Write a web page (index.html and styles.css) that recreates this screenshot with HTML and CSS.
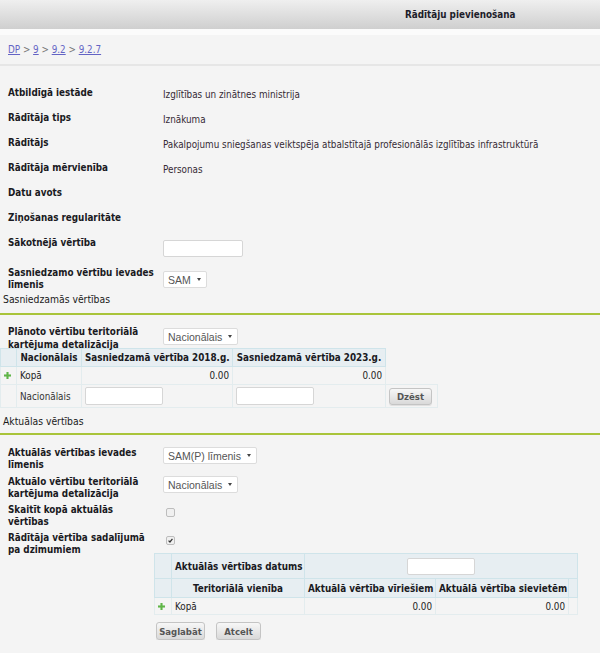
FILE: index.html
```html
<!DOCTYPE html>
<html lang="lv">
<head>
<meta charset="utf-8">
<title>Rādītāju pievienošana</title>
<link rel="stylesheet" href="styles.css">
</head>
<body>
<div class="topbar"><span class="title">Rādītāju pievienošana</span></div>
<div class="strip"></div>
<div class="crumbs"><a href="#">DP</a> &gt; <a href="#">9</a> &gt; <a href="#">9.2</a> &gt; <a href="#">9.2.7</a></div>

<div class="form main">
  <div class="row"><div class="lbl">Atbildīgā iestāde</div><div class="val">Izglītības un zinātnes ministrija</div></div>
  <div class="row"><div class="lbl">Rādītāja tips</div><div class="val">Iznākuma</div></div>
  <div class="row"><div class="lbl">Rādītājs</div><div class="val">Pakalpojumu sniegšanas veiktspēja atbalstītajā profesionālās izglītības infrastruktūrā</div></div>
  <div class="row"><div class="lbl">Rādītāja mērvienība</div><div class="val">Personas</div></div>
  <div class="row"><div class="lbl">Datu avots</div><div class="val"></div></div>
  <div class="row"><div class="lbl">Ziņošanas regularitāte</div><div class="val"></div></div>
  <div class="row r30"><div class="lbl">Sākotnējā vērtība</div><div class="ctl"><input class="txt w80" type="text"></div></div>
  <div class="row two"><div class="lbl">Sasniedzamo vērtību ievades<br>līmenis</div><div class="ctl"><span class="sel">SAM</span></div></div>
</div>

<div class="section">Sasniedzamās vērtības</div>

<div class="form sec1">
  <div class="row two"><div class="lbl">Plānoto vērtību teritoriālā<br>kartējuma detalizācija</div><div class="ctl"><span class="sel">Nacionālais</span></div></div>
</div>

<table class="grid g1">
  <colgroup><col class="c16"><col class="c65"><col class="c151"><col class="c153"><col class="c52"></colgroup>
  <tr class="head r19"><th></th><th>Nacionālais</th><th>Sasniedzamā vērtība 2018.g.</th><th>Sasniedzamā vērtība 2023.g.</th><td class="blank"></td></tr>
  <tr class="r19"><td class="ic"><svg class="plus" viewBox="0 0 8 8"><rect x="2.8" y="0" width="2.4" height="8" /><rect x="0" y="2.8" width="8" height="2.4" /></svg></td><td>Kopā</td><td class="num">0.00</td><td class="num">0.00</td><td class="blank"></td></tr>
  <tr class="r24"><td></td><td>Nacionālais</td><td><input class="txt w78" type="text"></td><td><input class="txt w78" type="text"></td><td class="bc"><button class="btn">Dzēst</button></td></tr>
</table>

<div class="section s2">Aktuālas vērtības</div>

<div class="form sec2">
  <div class="row h29"><div class="lbl">Aktuālās vērtības ievades<br>līmenis</div><div class="ctl"><span class="sel">SAM(P) līmenis</span></div></div>
  <div class="row h28"><div class="lbl">Aktuālo vērtību teritoriālā<br>kartējuma detalizācija</div><div class="ctl"><span class="sel">Nacionālais</span></div></div>
  <div class="row h28"><div class="lbl">Skaitīt kopā aktuālās<br>vērtības</div><div class="ctl"><span class="cb"></span></div></div>
  <div class="row h21"><div class="lbl">Rādītāja vērtība sadalījumā<br>pa dzimumiem</div><div class="ctl"><span class="cb"><svg viewBox="0 0 9 9"><path d="M2 4.6 L3.8 6.4 L7 2.4" /></svg></span></div></div>
</div>

<table class="grid g2">
  <colgroup><col class="c17"><col class="c133"><col class="c131"><col class="c133b"><col class="c9"></colgroup>
  <tr class="head r26"><th></th><th class="left">Aktuālās vērtības datums</th><th colspan="3"><input class="txt w68" type="text"></th></tr>
  <tr class="head r20"><th></th><th>Teritoriālā vienība</th><th>Aktuālā vērtība vīriešiem</th><th>Aktuālā vērtība sievietēm</th><th></th></tr>
  <tr class="r18"><td class="ic"><svg class="plus" viewBox="0 0 8 8"><rect x="2.8" y="0" width="2.4" height="8" /><rect x="0" y="2.8" width="8" height="2.4" /></svg></td><td>Kopā</td><td class="num">0.00</td><td class="num">0.00</td><td></td></tr>
</table>

<div class="actions"><button class="btn b1">Saglabāt</button><button class="btn b2">Atcelt</button></div>
</body>
</html>
```
FILE: styles.css
```css
html, body {
  margin: 0;
  padding: 0;
  background: #f4f4f4;
}
body {
  font-family: "DejaVu Sans Condensed", "DejaVu Sans", sans-serif;
  font-size: 9.8px;
  color: #222;
}
.topbar {
  height: 29px;
  background: linear-gradient(#efefef, #cfcfcf);
  line-height: 29px;
}
.title {
  padding-left: 405px;
  font-weight: bold;
  font-size: 9.8px;
  color: #1d1d2a;
}
.strip {
  height: 6px;
  background: #fbfbfb;
}
.crumbs {
  height: 29px;
  line-height: 29px;
  padding-left: 8px;
  border-bottom: 2px solid #e6e6e6;
  color: #777;
}
.crumbs a {
  color: #6464c4;
}
.form.main {
  padding-top: 21px;
}
.row {
  display: grid;
  grid-template-columns: 155px auto;
  padding-left: 8px;
  height: 25px;
  align-items: start;
}
.lbl {
  font-weight: bold;
  line-height: 12px;
  color: #1a1a22;
}
.val {
  line-height: 12px;
  padding-top: 2px;
  color: #352a35;
}
.ctl {
  display: flex;
  align-items: flex-start;
}
.r30 { height: 30px; }
.row.two {
  height: 25px;
}
.row.two .lbl {
  line-height: 11.5px;
}
.row.two .sel {
  margin-top: 4px;
}
.txt {
  box-sizing: border-box;
  height: 17px;
  border: 1px solid #d6d6d6;
  border-radius: 2px;
  background: #fff;
  margin: 0;
  padding: 0 3px;
}
.w80 { width: 80px; margin-top: 3px; }
.w78 { width: 78px; height: 18px; }
.w68 { width: 68px; }
.sel {
  box-sizing: border-box;
  display: inline-flex;
  align-items: center;
  height: 17px;
  padding: 0 5px 0 4px;
  background: #fff;
  border: 1px solid #dcdcdc;
  border-radius: 2px;
  font-family: "Liberation Sans", Arial, sans-serif;
  font-size: 10.5px;
  color: #555;
}
.sel::after {
  content: "";
  margin-left: 6px;
  border-left: 2px solid transparent;
  border-right: 2px solid transparent;
  border-top: 3.5px solid #444;
}
.section {
  padding-left: 3px;
  font-size: 10.3px;
  line-height: 14px;
  color: #1a1a1a;
  padding-bottom: 7px;
  border-bottom: 2px solid #a9c43a;
}
.sec1 { padding-top: 10px; }
.sec1 .row.two { height: 23px; }
.sec1 .row.two .lbl { line-height: 13px; }
.sec1 .row.two .sel { margin-top: 3px; }
.s2 { margin-top: 6px; padding-bottom: 5px; }
.sec2 { padding-top: 12px; }
.h29 { height: 29px; }
.h28 { height: 28px; }
.h21 { height: 21px; }
.sec2 .sel { margin-top: 0; }
.grid {
  border-collapse: collapse;
  table-layout: fixed;
}
.g1 { width: 437px; }
.g2 { width: 423px; margin-left: 154px; }
.c16 { width: 16px; }
.c65 { width: 65px; }
.c151 { width: 151px; }
.c153 { width: 153px; }
.c52 { width: 52px; }
.c17 { width: 17px; }
.c133 { width: 133px; }
.c131 { width: 131px; }
.c133b { width: 133px; }
.c9 { width: 9px; }
.grid th, .grid td {
  padding: 0 3px;
  border: 1px solid #e3ecee;
  white-space: nowrap;
  overflow: hidden;
}
.grid .head th {
  background: #e7eef2;
  border: 1px solid #cfe4ea;
  font-weight: bold;
  color: #1a1a22;
  text-align: center;
}
.grid .head th.left { text-align: left; }
.grid td.blank {
  border: none;
  background: transparent;
}
.r19 td, .r19 th { height: 17px; }
.r24 td { height: 22px; color: #333; }
.r26 th { height: 24px; }
.r20 th { height: 18px; }
.r18 td { height: 16px; }
.num { text-align: right; }
.grid td.ic { padding: 0 0 0 3px; }
.plus { display: block; width: 7px; height: 7px; fill: #5fb548; }
.grid td.bc { padding: 0 3px; }
.btn {
  box-sizing: border-box;
  height: 18px;
  padding: 0 8px;
  border: 1px solid #c4c4c4;
  border-radius: 3px;
  background: linear-gradient(#f7f7f7, #d9d9d9);
  font-family: "DejaVu Sans Condensed", "DejaVu Sans", sans-serif;
  font-size: 9.5px;
  font-weight: bold;
  color: #555;
  box-shadow: 0 1px 0 #e0e0e0;
}
.bc .btn { width: 43px; height: 17px; padding: 0; }
.cb {
  display: block;
  box-sizing: border-box;
  width: 9px;
  height: 9px;
  margin: 4px 0 0 3px;
  border: 1px solid #bdbdbd;
  border-radius: 2px;
  background: #f0f0f0;
}
.cb svg {
  display: block;
  width: 7px;
  height: 7px;
  fill: none;
  stroke: #333;
  stroke-width: 1.6;
}
.actions {
  display: flex;
  gap: 11px;
  padding: 7px 0 0 156px;
}
.b1 { width: 49px; padding: 0; }
.b2 { width: 45px; padding: 0; }
```
